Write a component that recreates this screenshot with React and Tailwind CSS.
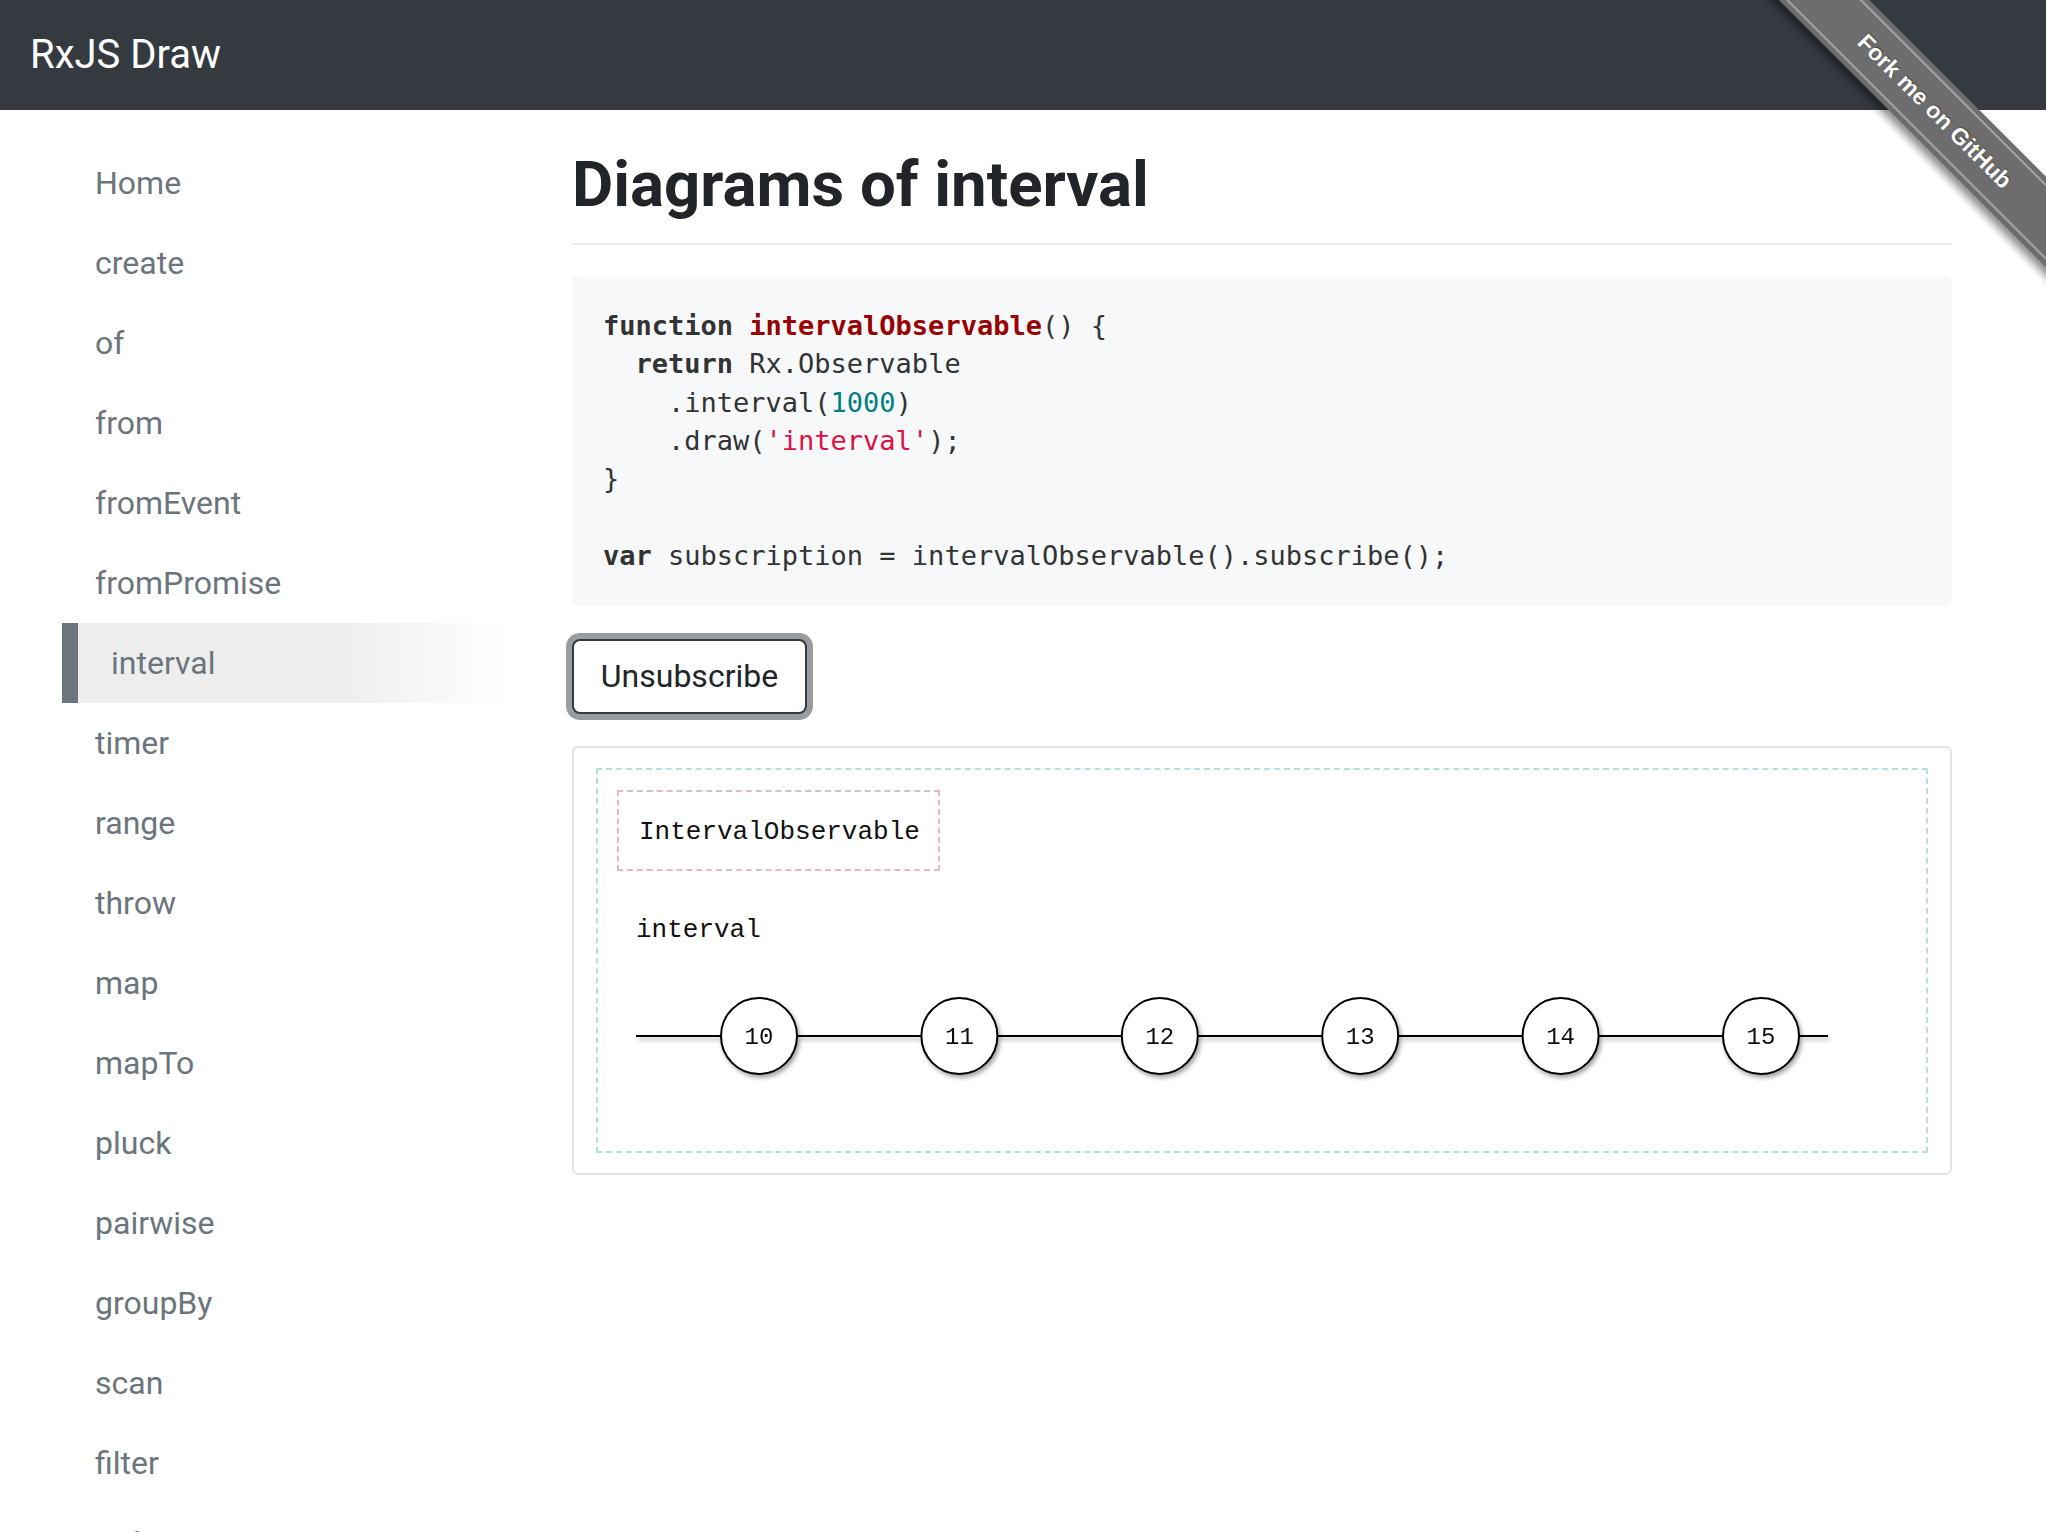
import React from "react";

const navItems = [
  "Home",
  "create",
  "of",
  "from",
  "fromEvent",
  "fromPromise",
  "interval",
  "timer",
  "range",
  "throw",
  "map",
  "mapTo",
  "pluck",
  "pairwise",
  "groupBy",
  "scan",
  "filter",
  "reduce",
  "take",
];

const ticks = [10, 11, 12, 13, 14, 15];

function Ribbon() {
  return (
    <div className="pointer-events-none absolute right-0 top-0 h-[320px] w-[320px] overflow-hidden">
      <div className="absolute left-[-21px] top-[79px] h-[64px] w-[460px] rotate-45 bg-[#6d6d6d] shadow-[0_6px_8px_rgba(0,0,0,0.45)]">
        <div className="mt-[5px] flex h-[54px] items-center justify-center border-y-2 border-[#a3a3a3] font-['Liberation_Sans',sans-serif] text-[23px] font-bold text-white [text-shadow:0_-1px_1px_rgba(0,0,0,0.5)]">
          Fork me on GitHub
        </div>
      </div>
    </div>
  );
}

function Timeline() {
  return (
    <svg width="1328" height="280" className="block">
      <defs>
        <filter id="sh" x="-20%" y="-20%" width="140%" height="160%">
          <feDropShadow dx="2" dy="3" stdDeviation="2" floodColor="#000" floodOpacity="0.35" />
        </filter>
      </defs>
      <text
        x="38"
        y="59"
        dominantBaseline="central"
        fontFamily="'Liberation Mono', monospace"
        fontSize="26"
        fill="#111"
      >
        interval
      </text>
      <g filter="url(#sh)">
        <line x1="38" y1="165" x2="1230" y2="165" stroke="#000" strokeWidth="2" />
        {ticks.map((t, i) => {
          const cx = 161 + i * 200.4;
          return (
            <g key={t}>
              <circle cx={cx} cy="165" r="38" fill="#fff" stroke="#000" strokeWidth="2" />
              <text
                x={cx}
                y="166"
                textAnchor="middle"
                dominantBaseline="central"
                fontFamily="'Liberation Mono', monospace"
                fontSize="24"
                fill="#111"
              >
                {t}
              </text>
            </g>
          );
        })}
      </g>
    </svg>
  );
}

export default function App() {
  return (
    <div className="relative h-screen overflow-hidden bg-white font-['Roboto',sans-serif]">
      {/* Top bar */}
      <header className="flex h-[110px] items-center bg-[#343a40] pl-[30px]">
        <div className="text-[40px] text-white">RxJS Draw</div>
      </header>

      <div className="flex">
        {/* Sidebar */}
        <nav className="ml-[62px] w-[448px] shrink-0 pt-[33px]">
          {navItems.map((it) =>
            it === "interval" ? (
              <div
                key={it}
                className="flex h-[80px] items-center border-l-[16px] border-[#6c757d] bg-[linear-gradient(to_right,#eeeeee_60%,#ffffff)] pl-[33px] text-[32px] text-[#6c757d]"
              >
                {it}
              </div>
            ) : (
              <div key={it} className="flex h-[80px] items-center pl-[33px] text-[32px] text-[#6c757d]">
                {it}
              </div>
            )
          )}
        </nav>

        {/* Main */}
        <main className="ml-[62px] w-[1380px] shrink-0">
          <h1 className="mt-[38px] border-b-2 border-[#e9ecef] pb-[21px] text-[63.5px] font-bold leading-[74px] text-[#212529]">
            Diagrams of interval
          </h1>

          <pre className="mt-[31px] rounded-[6px] bg-[#f6f8fa] p-[31px] font-['DejaVu_Sans_Mono',monospace] text-[27px] leading-[38.25px] text-[#333]">
            <span className="font-bold">function</span>{" "}
            <span className="font-bold text-[#990000]">intervalObservable</span>() {"{"}
            {"\n  "}
            <span className="font-bold">return</span> Rx.Observable
            {"\n    "}.interval(<span className="text-[#008080]">1000</span>)
            {"\n    "}.draw(<span className="text-[#dd1144]">'interval'</span>);
            {"\n}\n\n"}
            <span className="font-bold">var</span> subscription = intervalObservable().subscribe();
          </pre>

          <button
            type="button"
            className="mt-[33px] flex h-[75px] w-[235px] items-center justify-center rounded-[8px] border-2 border-[#343a40] bg-white text-[32px] text-[#212529] ring-[6px] ring-[#9a9da0]"
          >
            Unsubscribe
          </button>

          {/* Diagram card */}
          <div className="mt-[32px] rounded-[6px] border-2 border-[#e3e3e3] px-[22px] py-[20px]">
            <div className="border-2 border-dashed border-[#b5e0e0] pt-[20px]">
              <div className="ml-[19px] flex h-[81px] w-[323px] items-center border-2 border-dashed border-[#e6b8c4] pl-[20px] pt-[4px] font-['Liberation_Mono',monospace] text-[26px] text-[#111]">
                IntervalObservable
              </div>
              <Timeline />
            </div>
          </div>
        </main>
      </div>

      <Ribbon />
    </div>
  );
}
